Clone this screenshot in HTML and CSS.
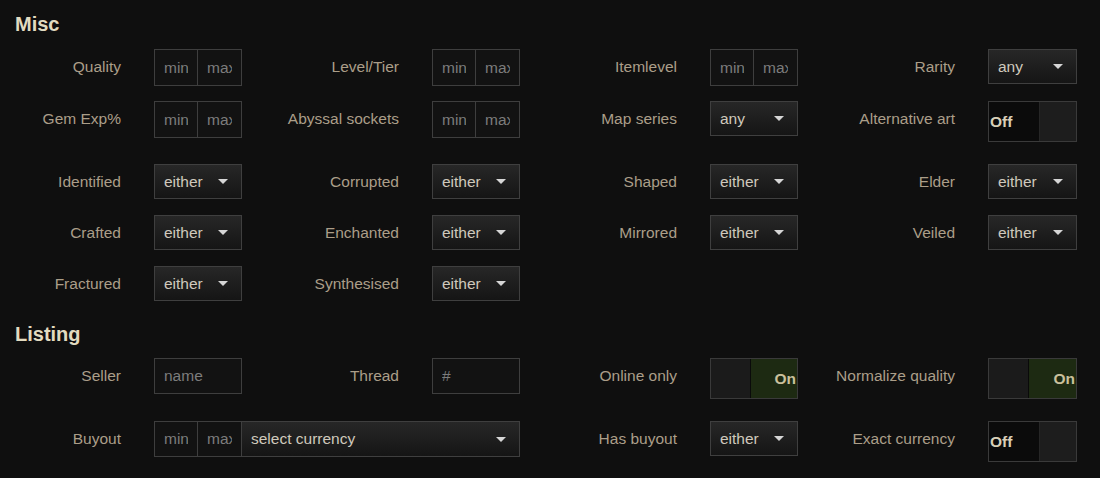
FILE: index.html
```html
<!DOCTYPE html>
<html lang="en">
<head>
    <meta charset="UTF-8">
    <title>Trade Filters</title>
    <link rel="stylesheet" href="styles.css">
</head>
<body>
    <div class="filters">
        <h3>Misc</h3>
        <div class="grid">
            <label>Quality</label>
            <div class="range"><input placeholder="min"><input placeholder="max"></div>
            <label>Level/Tier</label>
            <div class="range"><input placeholder="min"><input placeholder="max"></div>
            <label>Itemlevel</label>
            <div class="range"><input placeholder="min"><input placeholder="max"></div>
            <label>Rarity</label>
            <div class="select"><span>any</span><i class="caret"></i></div>

            <label>Gem Exp%</label>
            <div class="range"><input placeholder="min"><input placeholder="max"></div>
            <label>Abyssal sockets</label>
            <div class="range"><input placeholder="min"><input placeholder="max"></div>
            <label>Map series</label>
            <div class="select"><span>any</span><i class="caret"></i></div>
            <label>Alternative art</label>
            <div class="toggle off"><span class="knob">Off</span><span class="rest"></span></div>

            <label>Identified</label>
            <div class="select"><span>either</span><i class="caret"></i></div>
            <label>Corrupted</label>
            <div class="select"><span>either</span><i class="caret"></i></div>
            <label>Shaped</label>
            <div class="select"><span>either</span><i class="caret"></i></div>
            <label>Elder</label>
            <div class="select"><span>either</span><i class="caret"></i></div>

            <label>Crafted</label>
            <div class="select"><span>either</span><i class="caret"></i></div>
            <label>Enchanted</label>
            <div class="select"><span>either</span><i class="caret"></i></div>
            <label>Mirrored</label>
            <div class="select"><span>either</span><i class="caret"></i></div>
            <label>Veiled</label>
            <div class="select"><span>either</span><i class="caret"></i></div>

            <label>Fractured</label>
            <div class="select"><span>either</span><i class="caret"></i></div>
            <label>Synthesised</label>
            <div class="select"><span>either</span><i class="caret"></i></div>
        </div>

        <h3 class="second">Listing</h3>
        <div class="grid">
            <label>Seller</label>
            <input class="text" placeholder="name">
            <label>Thread</label>
            <input class="text" placeholder="#">
            <label>Online only</label>
            <div class="toggle on"><span class="rest"></span><span class="knob">On</span></div>
            <label>Normalize quality</label>
            <div class="toggle on"><span class="rest"></span><span class="knob">On</span></div>

            <label>Buyout</label>
            <div class="range wide">
                <input placeholder="min"><input placeholder="max">
                <div class="select"><span>select currency</span><i class="caret"></i></div>
            </div>
            <label>Has buyout</label>
            <div class="select"><span>either</span><i class="caret"></i></div>
            <label>Exact currency</label>
            <div class="toggle off"><span class="knob">Off</span><span class="rest"></span></div>
        </div>
    </div>
</body>
</html>
```

FILE: styles.css
```css
body { margin: 0; background: #0f0f0f; font-family: "Liberation Sans", Arial, sans-serif; }
.filters { padding: 0 0 0 15px; }
h3 { margin: 12px 0 13px; font-size: 20px; line-height: 24px; color: #e2dbc0; }
h3.second { margin-top: 20px; margin-bottom: 12px; }

.grid { display: grid; grid-template-columns: 139px 88px 190px 88px 190px 88px 190px 89px; row-gap: 15px; align-items: start; }
label { text-align: right; padding-right: 33px; font-size: 15.5px; line-height: 36px; color: #ab9e89; white-space: nowrap; }

input { box-sizing: border-box; height: 36px; margin: 0; padding: 0 9px; background: #121212; border: 1px solid #3e3e3e; color: #c9c4b8; font: 15.5px "Liberation Sans", Arial, sans-serif; outline: none; }
input::placeholder { color: #7c7c7c; }
.text { width: 88px; }

.range { display: flex; height: 37px; }
.range input { width: 44px; min-width: 44px; height: 37px; }
.range input + input { margin-left: -1px; width: 45px; }
.range.wide { grid-column: 2 / 5; height: 36px; }
.range.wide input { height: 36px; }
.range.wide .select { flex: 1; margin-left: -1px; height: 36px; }

.select { box-sizing: border-box; height: 35px; display: flex; align-items: center; justify-content: space-between; padding: 0 13px 0 9px; border: 1px solid #3f3f3f; background: linear-gradient(#272727, #151515); color: #cfc9bc; font-size: 15.5px; }
.caret { width: 0; height: 0; border-left: 5.5px solid transparent; border-right: 5.5px solid transparent; border-top: 5px solid #d6d6d6; }

.toggle { box-sizing: border-box; height: 41px; margin-bottom: 7px; display: flex; border: 1px solid #3a3a3a; font-size: 15.5px; font-weight: bold; color: #d9cfb8; }
.toggle span { display: flex; align-items: center; }
.toggle.off .knob { width: 49px; background: #0b0b0b; padding-left: 1px; border-right: 1px solid #262626; }
.toggle.off .rest { flex: 1; background: #1d1d1d; }
.toggle.on .rest { width: 39px; background: #1b1b1b; border-right: 1px solid #0a0a0a; }
.toggle.on .knob { flex: 1; justify-content: flex-end; padding-right: 1px; background: #1d2a12; color: #c9c09c; }
```
